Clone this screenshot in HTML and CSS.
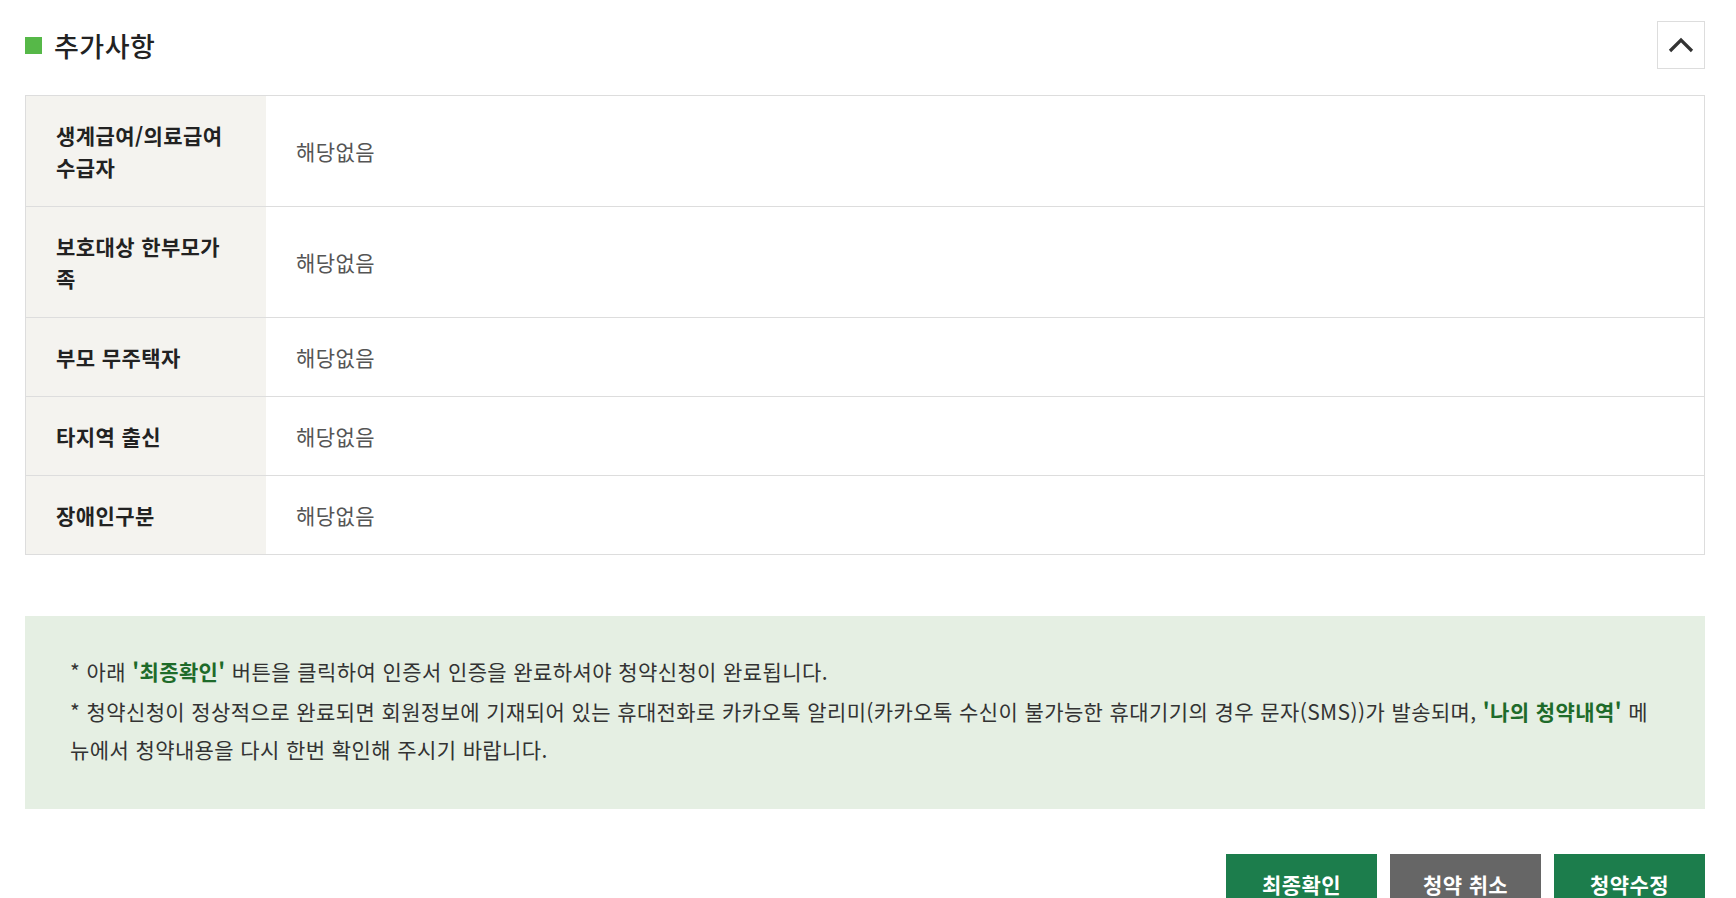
FILE: index.html
```html
<!DOCTYPE html>
<html lang="ko">
<head>
    <meta charset="UTF-8">
    <meta name="viewport" content="width=device-width, initial-scale=1.0">
    <title>추가사항</title>
    <link rel="stylesheet" href="styles.css">
</head>
<body>
    <div class="container">
        <div class="section-head">
            <h2 class="section-title">추가사항</h2>
            <button type="button" class="fold-btn" aria-label="접기">
                <svg width="26" height="16" viewBox="0 0 26 16">
                    <polyline points="2,14 13,3 24,14" fill="none" stroke="#333" stroke-width="3.2"/>
                </svg>
            </button>
        </div>

        <table class="info-table">
            <tr>
                <th>생계급여/의료급여 수급자</th>
                <td>해당없음</td>
            </tr>
            <tr>
                <th>보호대상 한부모가족</th>
                <td>해당없음</td>
            </tr>
            <tr>
                <th>부모 무주택자</th>
                <td>해당없음</td>
            </tr>
            <tr>
                <th>타지역 출신</th>
                <td>해당없음</td>
            </tr>
            <tr>
                <th>장애인구분</th>
                <td>해당없음</td>
            </tr>
        </table>

        <div class="notice">
            <p>* 아래 <strong>'최종확인'</strong> 버튼을 클릭하여 인증서 인증을 완료하셔야 청약신청이 완료됩니다.</p>
            <p>* 청약신청이 정상적으로 완료되면 회원정보에 기재되어 있는 휴대전화로 카카오톡 알리미(카카오톡 수신이 불가능한 휴대기기의 경우 문자(SMS))가 발송되며, <strong>'나의 청약내역'</strong> 메뉴에서 청약내용을 다시 한번 확인해 주시기 바랍니다.</p>
        </div>

        <div class="actions">
            <button type="button" class="btn btn-green">최종확인</button>
            <button type="button" class="btn btn-gray">청약 취소</button>
            <button type="button" class="btn btn-green">청약수정</button>
        </div>
    </div>
</body>
</html>
```

FILE: styles.css
```css
body {
    margin: 0;
    background: #fff;
    font-family: "Noto Sans CJK KR", "Noto Sans", sans-serif;
    color: #222;
}
.container {
    width: 1680px;
    margin-left: 25px;
    padding-top: 21px;
}
.section-head {
    display: flex;
    justify-content: space-between;
    align-items: center;
    height: 48px;
    margin-bottom: 26px;
}
.section-title {
    display: flex;
    align-items: center;
    gap: 12px;
    margin: 0;
    font-size: 27px;
    font-weight: 500;
    letter-spacing: 0.5px;
    color: #222;
}
.section-title::before {
    content: "";
    width: 17px;
    height: 17px;
    background: #56b848;
}
.fold-btn {
    width: 48px;
    height: 48px;
    padding: 0;
    border: 1px solid #ddd;
    background: #fff;
    display: flex;
    align-items: center;
    justify-content: center;
    cursor: pointer;
}
.info-table {
    width: 100%;
    border-collapse: collapse;
    border: 1px solid #ddd;
}
.info-table th,
.info-table td {
    border-top: 1px solid #ddd;
    padding: 23px 30px;
    font-size: 21px;
    letter-spacing: 0.4px;
    line-height: 32px;
    text-align: left;
    vertical-align: middle;
}
.info-table th {
    width: 180px;
    background: #f4f3ef;
    font-weight: 700;
    color: #222;
}
.info-table td {
    color: #555;
    font-weight: 400;
}
.notice {
    margin-top: 61px;
    padding: 36px 45px 41px;
    background: #e5efe3;
    font-size: 21px;
    letter-spacing: 0.4px;
    line-height: 38px;
    color: #333;
}
.notice p {
    margin: 0;
}
.notice p + p {
    margin-top: 2px;
}
.notice strong {
    color: #1e6b2a;
}
.actions {
    display: flex;
    justify-content: flex-end;
    gap: 13px;
    margin-top: 45px;
}
.btn {
    width: 151px;
    height: 60px;
    border: none;
    color: #fff;
    font-family: inherit;
    font-size: 21px;
    font-weight: 700;
    letter-spacing: 0.4px;
    cursor: pointer;
}
.btn-green {
    background: #1c7d4c;
}
.btn-gray {
    background: #666;
}
```
